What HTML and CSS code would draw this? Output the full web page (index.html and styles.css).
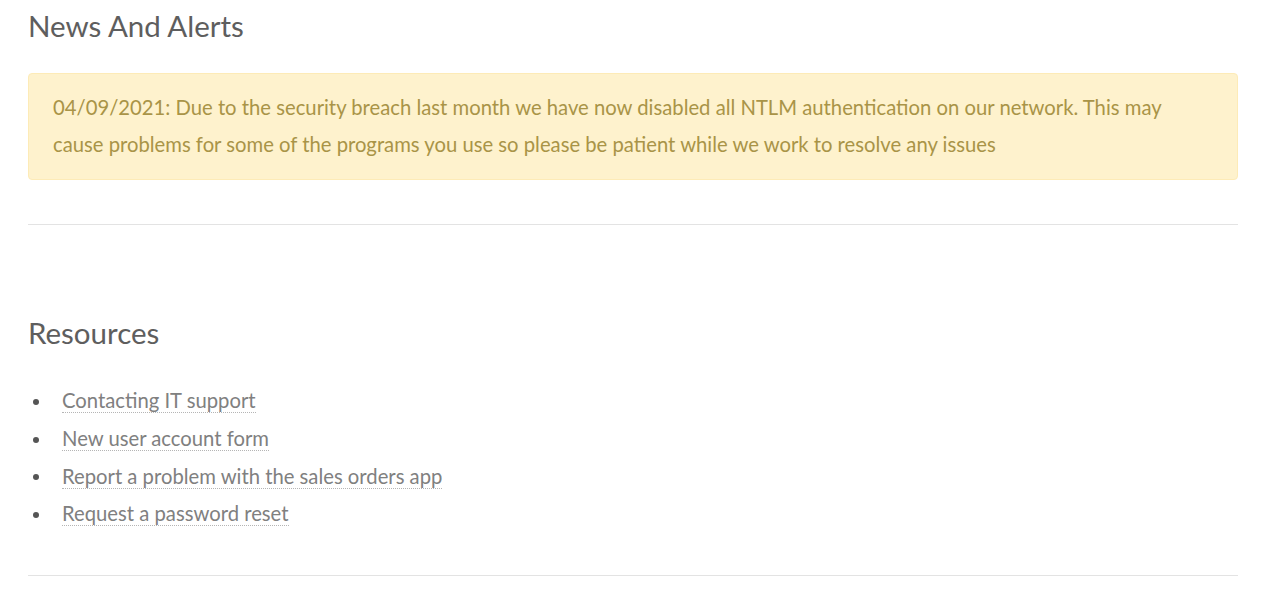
FILE: index.html
```html
<!DOCTYPE html>
<html lang="en">
<head>
<meta charset="utf-8">
<title>News And Alerts</title>
<link rel="stylesheet" href="styles.css">
</head>
<body>
<main class="page">
  <section class="section">
    <h2 class="section-title">News And Alerts</h2>
    <div class="alert">04/09/2021: Due to the security breach last month we have now disabled all NTLM authentication on our network. This may cause problems for some of the programs you use so please be patient while we work to resolve any issues</div>
  </section>
  <hr class="divider">
  <section class="section resources">
    <h2 class="section-title">Resources</h2>
    <ul class="links">
      <li><a href="#">Contacting IT support</a></li>
      <li><a href="#">New user account form</a></li>
      <li><a href="#">Report a problem with the sales orders app</a></li>
      <li><a href="#">Request a password reset</a></li>
    </ul>
  </section>
  <hr class="divider divider-end">
</main>
</body>
</html>
```

FILE: styles.css
```css
html, body {
  margin: 0;
  padding: 0;
  background: #fff;
}
body {
  font-family: "Lato", "Open Sans", sans-serif;
  font-size: 20.25px;
  color: #666;
}
.page {
  width: 1210px;
  padding: 8px 0 0 28px;
}
.section-title {
  margin: 0;
  font-size: 29.5px;
  font-weight: 400;
  line-height: 36px;
  color: #5e5e5e;
}
.alert {
  margin-top: 29px;
  padding: 15px 24px 16px;
  background: #fef2cd;
  border: 1px solid #fdebb7;
  border-radius: 4px;
  color: #a99447;
  line-height: 37px;
}
.divider {
  border: 0;
  border-top: 1px solid #e3e3e3;
  margin: 44px 0 0;
}
.resources {
  padding-top: 90px;
}
.links {
  margin: 31px 0 0;
  padding: 0;
  list-style: none;
}
.links li {
  display: flex;
  align-items: center;
  height: 37.7px;
}
.links li::before {
  content: "";
  width: 6px;
  height: 6px;
  border-radius: 50%;
  background: #555;
  margin: 2px 23px 0 5px;
  flex: none;
}
.links a {
  color: #808080;
  text-decoration: none;
  border-bottom: 1px dotted #b5b5b5;
  line-height: 24px;
}
.divider-end {
  margin-top: 42px;
}
```
